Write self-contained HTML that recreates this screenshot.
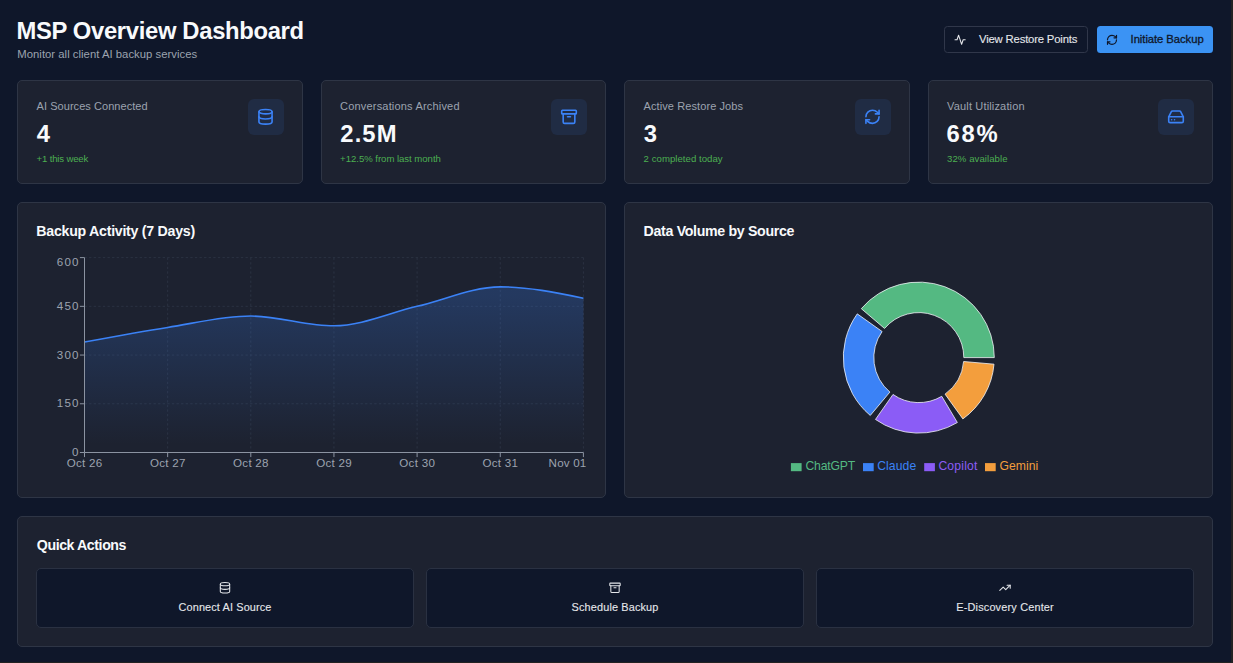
<!DOCTYPE html>
    <html><head><meta charset="utf-8"><style>
    html,body{margin:0;padding:0;}
    body{width:1233px;height:663px;background:#0f172a;position:relative;overflow:hidden;font-family:"Liberation Sans",sans-serif;}
    .t{position:absolute;white-space:nowrap;line-height:1;}
    .b{position:absolute;box-sizing:border-box;}
    svg{position:absolute;left:0;top:0;}
    </style></head><body>
    <div class="b" style="left:944px;top:26px;width:144px;height:27px;background:#0f172a;border:1px solid #30374a;border-radius:3.5px"></div>
<div class="b" style="left:1097px;top:26px;width:116px;height:27px;background:#3b93f4;border-radius:3.5px"></div>
<div class="b" style="left:17px;top:80px;width:285.5px;height:104px;background:#1d2230;border:1px solid #2e3545;border-radius:5px"></div>
<div class="b" style="left:247.5px;top:99px;width:36px;height:36px;background:#202c44;border-radius:6px"></div>
<div class="b" style="left:320.5px;top:80px;width:285.5px;height:104px;background:#1d2230;border:1px solid #2e3545;border-radius:5px"></div>
<div class="b" style="left:551.0px;top:99px;width:36px;height:36px;background:#202c44;border-radius:6px"></div>
<div class="b" style="left:624px;top:80px;width:285.5px;height:104px;background:#1d2230;border:1px solid #2e3545;border-radius:5px"></div>
<div class="b" style="left:854.5px;top:99px;width:36px;height:36px;background:#202c44;border-radius:6px"></div>
<div class="b" style="left:927.5px;top:80px;width:285.5px;height:104px;background:#1d2230;border:1px solid #2e3545;border-radius:5px"></div>
<div class="b" style="left:1158.0px;top:99px;width:36px;height:36px;background:#202c44;border-radius:6px"></div>
<div class="b" style="left:17px;top:202px;width:589px;height:296px;background:#1d2230;border:1px solid #2e3545;border-radius:5px"></div>
<div class="b" style="left:624px;top:202px;width:589px;height:296px;background:#1d2230;border:1px solid #2e3545;border-radius:5px"></div>
<div class="b" style="left:17px;top:516px;width:1196px;height:131px;background:#1d2230;border:1px solid #2e3545;border-radius:5px"></div>
<div class="b" style="left:36px;top:568px;width:378px;height:60px;background:#0f172a;border:1px solid #2a3142;border-radius:5px"></div>
<div class="b" style="left:426px;top:568px;width:378px;height:60px;background:#0f172a;border:1px solid #2a3142;border-radius:5px"></div>
<div class="b" style="left:816px;top:568px;width:378px;height:60px;background:#0f172a;border:1px solid #2a3142;border-radius:5px"></div>
    <div class="t" style="top:19.01px;font-size:23.8px;color:#f8fafc;font-weight:700;letter-spacing:-0.324px;left:16.40px;">MSP Overview Dashboard</div>
<div class="t" style="top:49.01px;font-size:11.3px;color:#9ca3af;letter-spacing:0.024px;left:17.30px;">Monitor all client AI backup services</div>
<div class="t" style="top:34.01px;font-size:11.3px;color:#e5e7eb;letter-spacing:-0.173px;-webkit-text-stroke:0.1px #e5e7eb;left:979.00px;">View Restore Points</div>
<div class="t" style="top:34.01px;font-size:11.3px;color:#0f172a;letter-spacing:-0.072px;-webkit-text-stroke:0.3px #0f172a;left:1130.60px;">Initiate Backup</div>
<div class="t" style="top:101.00px;font-size:11.0px;color:#9ca3af;letter-spacing:0.049px;left:36.60px;">AI Sources Connected</div>
<div class="t" style="top:122.01px;font-size:23.8px;color:#f8fafc;font-weight:700;left:36.80px;">4</div>
<div class="t" style="top:154.02px;font-size:9.6px;color:#4caf50;letter-spacing:-0.174px;left:36.60px;">+1 this week</div>
<div class="t" style="top:101.00px;font-size:11.0px;color:#9ca3af;letter-spacing:0.183px;left:340.10px;">Conversations Archived</div>
<div class="t" style="top:122.01px;font-size:23.8px;color:#f8fafc;font-weight:700;letter-spacing:1.098px;left:340.30px;">2.5M</div>
<div class="t" style="top:154.02px;font-size:9.6px;color:#4caf50;letter-spacing:-0.038px;left:340.10px;">+12.5% from last month</div>
<div class="t" style="top:101.00px;font-size:11.0px;color:#9ca3af;letter-spacing:0.087px;left:643.60px;">Active Restore Jobs</div>
<div class="t" style="top:122.01px;font-size:23.8px;color:#f8fafc;font-weight:700;left:643.80px;">3</div>
<div class="t" style="top:154.02px;font-size:9.6px;color:#4caf50;letter-spacing:0.037px;left:643.60px;">2 completed today</div>
<div class="t" style="top:101.00px;font-size:11.0px;color:#9ca3af;letter-spacing:0.156px;left:947.10px;">Vault Utilization</div>
<div class="t" style="top:122.01px;font-size:23.8px;color:#f8fafc;font-weight:700;letter-spacing:1.680px;left:946.60px;">68%</div>
<div class="t" style="top:154.02px;font-size:9.6px;color:#4caf50;letter-spacing:0.054px;left:947.10px;">32% available</div>
<div class="t" style="top:224.01px;font-size:14.2px;color:#f8fafc;font-weight:700;letter-spacing:-0.268px;left:36.30px;">Backup Activity (7 Days)</div>
<div class="t" style="top:224.01px;font-size:14.2px;color:#f8fafc;font-weight:700;letter-spacing:-0.331px;left:643.60px;">Data Volume by Source</div>
<div class="t" style="top:538.00px;font-size:14.2px;color:#f8fafc;font-weight:700;letter-spacing:-0.431px;left:36.80px;">Quick Actions</div>
<div class="t" style="top:602.01px;font-size:10.9px;color:#e5e7eb;letter-spacing:0.124px;-webkit-text-stroke:0.1px #e5e7eb;left:25.06px;width:400px;text-align:center;">Connect AI Source</div>
<div class="t" style="top:602.01px;font-size:10.9px;color:#e5e7eb;letter-spacing:0.145px;-webkit-text-stroke:0.1px #e5e7eb;left:415.07px;width:400px;text-align:center;">Schedule Backup</div>
<div class="t" style="top:602.01px;font-size:10.9px;color:#e5e7eb;letter-spacing:0.181px;-webkit-text-stroke:0.1px #e5e7eb;left:805.09px;width:400px;text-align:center;">E-Discovery Center</div>
<div class="t" style="top:446.01px;font-size:11.6px;color:#9ca3af;right:1154.50px;text-align:right;">0</div>
<div class="t" style="top:397.00px;font-size:11.6px;color:#9ca3af;letter-spacing:1.178px;right:1153.32px;text-align:right;">150</div>
<div class="t" style="top:349.01px;font-size:11.6px;color:#9ca3af;letter-spacing:1.178px;right:1153.32px;text-align:right;">300</div>
<div class="t" style="top:300.01px;font-size:11.6px;color:#9ca3af;letter-spacing:1.178px;right:1153.32px;text-align:right;">450</div>
<div class="t" style="top:256.01px;font-size:11.6px;color:#9ca3af;letter-spacing:1.178px;right:1153.32px;text-align:right;">600</div>
<div class="t" style="top:457.01px;font-size:11.6px;color:#9ca3af;letter-spacing:0.269px;left:-115.37px;width:400px;text-align:center;">Oct 26</div>
<div class="t" style="top:457.01px;font-size:11.6px;color:#9ca3af;letter-spacing:0.269px;left:-32.22px;width:400px;text-align:center;">Oct 27</div>
<div class="t" style="top:457.01px;font-size:11.6px;color:#9ca3af;letter-spacing:0.269px;left:50.93px;width:400px;text-align:center;">Oct 28</div>
<div class="t" style="top:457.01px;font-size:11.6px;color:#9ca3af;letter-spacing:0.269px;left:134.08px;width:400px;text-align:center;">Oct 29</div>
<div class="t" style="top:457.01px;font-size:11.6px;color:#9ca3af;letter-spacing:0.269px;left:217.23px;width:400px;text-align:center;">Oct 30</div>
<div class="t" style="top:457.01px;font-size:11.6px;color:#9ca3af;letter-spacing:0.269px;left:300.38px;width:400px;text-align:center;">Oct 31</div>
<div class="t" style="top:457.01px;font-size:11.6px;color:#9ca3af;letter-spacing:0.193px;left:367.55px;width:400px;text-align:center;">Nov 01</div>
<div class="t" style="top:460.02px;font-size:12.2px;color:#54b982;letter-spacing:-0.202px;left:805.50px;">ChatGPT</div>
<div class="t" style="top:460.02px;font-size:12.2px;color:#3b82f6;letter-spacing:0.075px;left:877.20px;">Claude</div>
<div class="t" style="top:460.02px;font-size:12.2px;color:#8b5cf6;letter-spacing:0.177px;left:938.40px;">Copilot</div>
<div class="t" style="top:460.02px;font-size:12.2px;color:#f39e3d;left:999.60px;">Gemini</div>
    <svg width="1233" height="663" viewBox="0 0 1233 663">
    <line x1="84.5" y1="403.77" x2="583.4" y2="403.77" stroke="#2b3242" stroke-dasharray="2.3 2.3"/>
<line x1="84.5" y1="355.05" x2="583.4" y2="355.05" stroke="#2b3242" stroke-dasharray="2.3 2.3"/>
<line x1="84.5" y1="306.33" x2="583.4" y2="306.33" stroke="#2b3242" stroke-dasharray="2.3 2.3"/>
<line x1="84.5" y1="257.60" x2="583.4" y2="257.60" stroke="#2b3242" stroke-dasharray="2.3 2.3"/>
<line x1="167.65" y1="257.6" x2="167.65" y2="452.5" stroke="#2b3242" stroke-dasharray="2.3 2.3"/>
<line x1="250.80" y1="257.6" x2="250.80" y2="452.5" stroke="#2b3242" stroke-dasharray="2.3 2.3"/>
<line x1="333.95" y1="257.6" x2="333.95" y2="452.5" stroke="#2b3242" stroke-dasharray="2.3 2.3"/>
<line x1="417.10" y1="257.6" x2="417.10" y2="452.5" stroke="#2b3242" stroke-dasharray="2.3 2.3"/>
<line x1="500.25" y1="257.6" x2="500.25" y2="452.5" stroke="#2b3242" stroke-dasharray="2.3 2.3"/>
<line x1="583.40" y1="257.6" x2="583.40" y2="452.5" stroke="#2b3242" stroke-dasharray="2.3 2.3"/>
<defs><linearGradient id="g" x1="0" y1="0" x2="0" y2="1"><stop offset="5%" stop-color="#3b82f6" stop-opacity="0.24"/><stop offset="95%" stop-color="#3b82f6" stop-opacity="0.0"/></linearGradient></defs>
<path d="M84.50,342.06C112.22,336.91,139.93,331.77,167.65,327.44C195.37,323.11,223.08,316.07,250.80,316.07C278.52,316.07,306.23,325.81,333.95,325.81C361.67,325.81,389.38,312.82,417.10,306.33C444.82,299.83,472.53,286.84,500.25,286.84C527.97,286.84,555.68,292.52,583.40,298.20L583.40,452.5L84.50,452.5Z" fill="url(#g)"/>
<path d="M84.50,342.06C112.22,336.91,139.93,331.77,167.65,327.44C195.37,323.11,223.08,316.07,250.80,316.07C278.52,316.07,306.23,325.81,333.95,325.81C361.67,325.81,389.38,312.82,417.10,306.33C444.82,299.83,472.53,286.84,500.25,286.84C527.97,286.84,555.68,292.52,583.40,298.20" fill="none" stroke="#3b82f6" stroke-width="1.6"/>
<line x1="84.5" y1="257.6" x2="84.5" y2="452.5" stroke="#8b93a1"/>
<line x1="84.5" y1="452.5" x2="583.4" y2="452.5" stroke="#8b93a1"/>
<line x1="79.9" y1="452.50" x2="84.5" y2="452.50" stroke="#8b93a1"/>
<line x1="79.9" y1="403.77" x2="84.5" y2="403.77" stroke="#8b93a1"/>
<line x1="79.9" y1="355.05" x2="84.5" y2="355.05" stroke="#8b93a1"/>
<line x1="79.9" y1="306.33" x2="84.5" y2="306.33" stroke="#8b93a1"/>
<line x1="79.9" y1="257.60" x2="84.5" y2="257.60" stroke="#8b93a1"/>
<line x1="84.50" y1="452.5" x2="84.50" y2="457.1" stroke="#8b93a1"/>
<line x1="167.65" y1="452.5" x2="167.65" y2="457.1" stroke="#8b93a1"/>
<line x1="250.80" y1="452.5" x2="250.80" y2="457.1" stroke="#8b93a1"/>
<line x1="333.95" y1="452.5" x2="333.95" y2="457.1" stroke="#8b93a1"/>
<line x1="417.10" y1="452.5" x2="417.10" y2="457.1" stroke="#8b93a1"/>
<line x1="500.25" y1="452.5" x2="500.25" y2="457.1" stroke="#8b93a1"/>
<line x1="583.40" y1="452.5" x2="583.40" y2="457.1" stroke="#8b93a1"/>
<path d="M994.30,357.60A75.5,75.5,0,0,0,861.30,308.67L884.53,328.43A45,45,0,0,1,963.80,357.60Z" fill="#54b982" stroke="#f1f3f6" stroke-width="0.8"/>
<path d="M857.26,313.86A75.5,75.5,0,0,0,870.27,415.44L889.87,392.07A45,45,0,0,1,882.12,331.53Z" fill="#3b82f6" stroke="#f1f3f6" stroke-width="0.8"/>
<path d="M875.49,419.45A75.5,75.5,0,0,0,957.35,422.52L941.77,396.29A45,45,0,0,1,892.99,394.46Z" fill="#8b5cf6" stroke="#f1f3f6" stroke-width="0.8"/>
<path d="M962.86,418.91A75.5,75.5,0,0,0,994.01,364.18L963.63,361.52A45,45,0,0,1,945.06,394.14Z" fill="#f39e3d" stroke="#f1f3f6" stroke-width="0.8"/>
<rect x="790.9" y="463.1" width="10.7" height="8.1" fill="#54b982"/>
<rect x="863" y="463.1" width="10.7" height="8.1" fill="#3b82f6"/>
<rect x="924.2" y="463.1" width="10.7" height="8.1" fill="#8b5cf6"/>
<rect x="985" y="463.1" width="10.7" height="8.1" fill="#f39e3d"/>
<g transform="translate(256.75,108.05) scale(0.7292)" fill="none" stroke="#3b82f6" stroke-width="2.2" stroke-linecap="round" stroke-linejoin="round"><ellipse cx="12" cy="5" rx="9" ry="3"/><path d="M3 5V19A9 3 0 0 0 21 19V5"/><path d="M3 12A9 3 0 0 0 21 12"/></g>
<g transform="translate(560.25,108.05) scale(0.7292)" fill="none" stroke="#3b82f6" stroke-width="2.2" stroke-linecap="round" stroke-linejoin="round"><rect width="20" height="5" x="2" y="3" rx="1"/><path d="M4 8v11a2 2 0 0 0 2 2h12a2 2 0 0 0 2-2V8"/><path d="M10 12h4"/></g>
<g transform="translate(863.75,108.05) scale(0.7292)" fill="none" stroke="#3b82f6" stroke-width="2.2" stroke-linecap="round" stroke-linejoin="round"><path d="M3 12a9 9 0 0 1 9-9 9.75 9.75 0 0 1 6.74 2.74L21 8"/><path d="M21 3v5h-5"/><path d="M21 12a9 9 0 0 1-9 9 9.75 9.75 0 0 1-6.74-2.74L3 16"/><path d="M8 16H3v5"/></g>
<g transform="translate(1167.25,108.05) scale(0.7292)" fill="none" stroke="#3b82f6" stroke-width="2.2" stroke-linecap="round" stroke-linejoin="round"><line x1="22" x2="2" y1="12" y2="12"/><path d="M5.45 5.11 2 12v6a2 2 0 0 0 2 2h16a2 2 0 0 0 2-2v-6l-3.45-6.89A2 2 0 0 0 16.76 4H7.24a2 2 0 0 0-1.79 1.11z"/><line x1="6" x2="6.01" y1="16" y2="16"/><line x1="10" x2="10.01" y1="16" y2="16"/></g>
<g transform="translate(954.00,33.65) scale(0.5083)" fill="none" stroke="#e5e7eb" stroke-width="2.1" stroke-linecap="round" stroke-linejoin="round"><path d="M22 12h-4l-3 9L9 3l-3 9H2"/></g>
<g transform="translate(1106.00,33.80) scale(0.5000)" fill="none" stroke="#0f172a" stroke-width="2.4" stroke-linecap="round" stroke-linejoin="round"><path d="M3 12a9 9 0 0 1 9-9 9.75 9.75 0 0 1 6.74 2.74L21 8"/><path d="M21 3v5h-5"/><path d="M21 12a9 9 0 0 1-9 9 9.75 9.75 0 0 1-6.74-2.74L3 16"/><path d="M8 16H3v5"/></g>
<g transform="translate(218.75,581.55) scale(0.5208)" fill="none" stroke="#e5e7eb" stroke-width="2" stroke-linecap="round" stroke-linejoin="round"><ellipse cx="12" cy="5" rx="9" ry="3"/><path d="M3 5V19A9 3 0 0 0 21 19V5"/><path d="M3 12A9 3 0 0 0 21 12"/></g>
<g transform="translate(608.75,581.55) scale(0.5208)" fill="none" stroke="#e5e7eb" stroke-width="2" stroke-linecap="round" stroke-linejoin="round"><rect width="20" height="5" x="2" y="3" rx="1"/><path d="M4 8v11a2 2 0 0 0 2 2h12a2 2 0 0 0 2-2V8"/><path d="M10 12h4"/></g>
<g transform="translate(998.75,581.55) scale(0.5208)" fill="none" stroke="#e5e7eb" stroke-width="2" stroke-linecap="round" stroke-linejoin="round"><polyline points="22 7 13.5 15.5 8.5 10.5 2 17"/><polyline points="16 7 22 7 22 13"/></g>
    </svg>
    <div class="b" style="left:1231px;top:0;width:2px;height:663px;background:#222"></div>
    <div class="b" style="left:0;top:662px;width:1233px;height:1px;background:#222"></div>
    </body></html>
